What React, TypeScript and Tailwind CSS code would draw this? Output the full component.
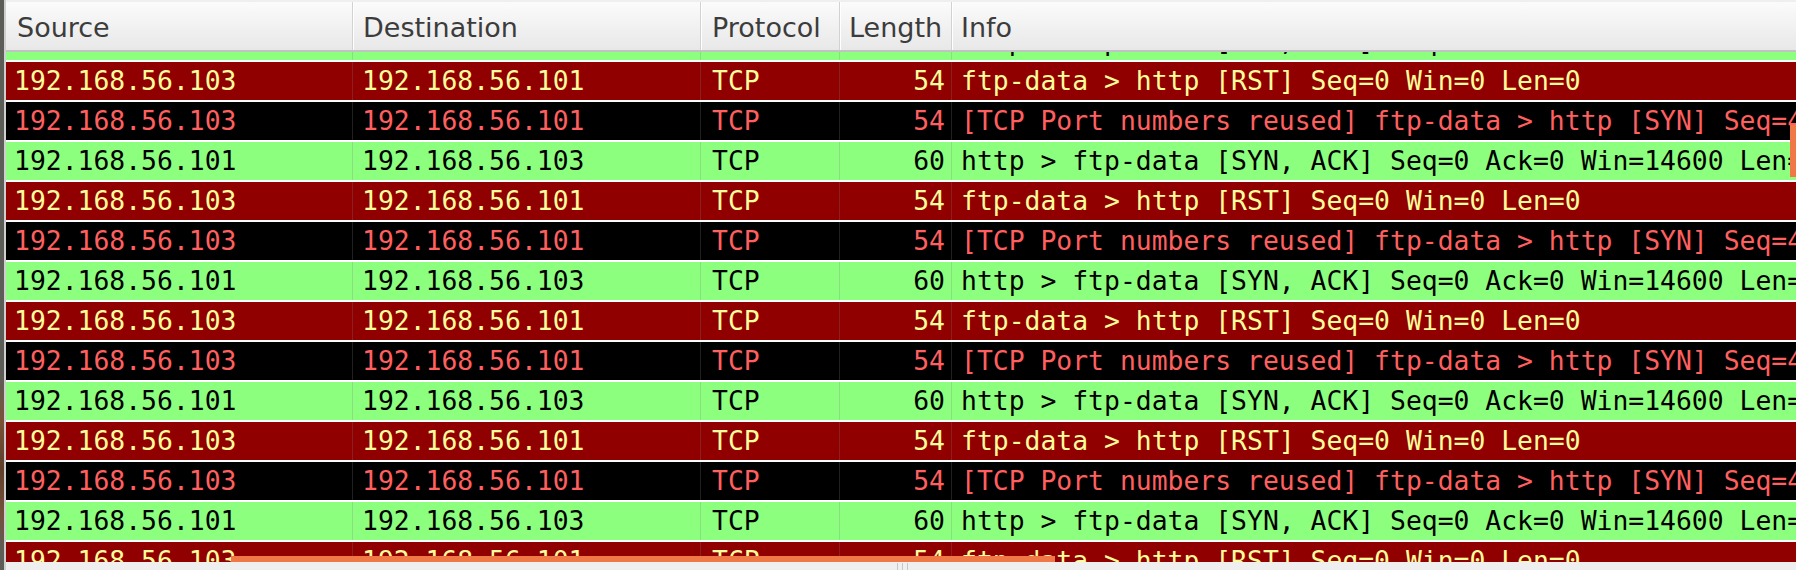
import React from 'react';

type Kind = 'rst' | 'bad' | 'http';

const PACKETS: Record<Kind, { src: string; dst: string; len: string; info: string }> = {
  rst: {
    src: '192.168.56.103',
    dst: '192.168.56.101',
    len: '54',
    info: 'ftp-data > http [RST] Seq=0 Win=0 Len=0',
  },
  bad: {
    src: '192.168.56.103',
    dst: '192.168.56.101',
    len: '54',
    info: '[TCP Port numbers reused] ftp-data > http [SYN] Seq=4112353398 Win=8192 Len=0',
  },
  http: {
    src: '192.168.56.101',
    dst: '192.168.56.103',
    len: '60',
    info: 'http > ftp-data [SYN, ACK] Seq=0 Ack=0 Win=14600 Len=0 MSS=1460',
  },
};

// old wireshark default colouring rules
const ROW_STYLE: Record<Kind, string> = {
  rst: 'bg-[#900000] text-[#fffc9c]',
  bad: 'bg-black text-[#ff5f5f]',
  http: 'bg-[#8cff7f] text-black',
};

const ORDER: Kind[] = ['rst', 'bad', 'http', 'rst', 'bad', 'http', 'rst', 'bad', 'http', 'rst', 'bad', 'http', 'rst'];

const cell = 'h-full shrink-0 flex items-center border-r border-[#80808040]';

const Row: React.FC<{ kind: Kind; className?: string }> = ({ kind, className = '' }) => {
  const p = PACKETS[kind];
  return (
    <div className={`flex h-[40px] shrink-0 border-b-2 border-white whitespace-nowrap ${ROW_STYLE[kind]} ${className}`}>
      <div className={`${cell} w-[347px] pl-[8px]`}>{p.src}</div>
      <div className={`${cell} w-[348px] pl-[9px]`}>{p.dst}</div>
      <div className={`${cell} w-[139px] pl-[11px]`}>TCP</div>
      <div className={`${cell} w-[112px] justify-end pr-[6px]`}>{p.len}</div>
      <div className="h-full flex-1 min-w-0 flex items-center pl-[9px] overflow-hidden">{p.info}</div>
    </div>
  );
};

const headCell = 'h-full shrink-0 flex items-center pt-[4px] border-r border-[#d2d2d2]';

export default function App() {
  return (
    <div className="w-[1796px] h-[570px] flex overflow-hidden bg-white">
      {/* window edge */}
      <div className="w-[4px] h-full shrink-0 bg-[linear-gradient(to_bottom,#5d5d57_0%,#5d5d57_66%,#7a5236_74%,#5e3f2c_82%,#74503a_90%,#5d5d57_97%)]" />
      <div className="w-[2px] h-full shrink-0 bg-[#cfcfcf]" />

      <div className="flex-1 min-w-0 h-full flex flex-col">
        {/* column header */}
        <div className="h-[52px] shrink-0 flex border-t-2 border-b-2 border-t-[#efefef] border-b-[#c2c2c2] bg-gradient-to-b from-[#fbfbfb] to-[#e8e8e8] text-[27px] text-[#3c3c3c] font-['DejaVu_Sans',sans-serif] whitespace-nowrap">
          <div className={`${headCell} w-[347px] pl-[11px]`}>Source</div>
          <div className={`${headCell} w-[348px] pl-[9px] border-l border-l-white`}>Destination</div>
          <div className={`${headCell} w-[139px] pl-[10px] border-l border-l-white`}>Protocol</div>
          <div className={`${headCell} w-[112px] pl-[8px] border-l border-l-white`}>Length</div>
          <div className="h-full flex-1 flex items-center pt-[4px] pl-[8px] border-l border-l-white">Info</div>
        </div>

        {/* packet list */}
        <div className="relative flex-1 min-h-0 flex flex-col overflow-hidden text-[26.4px] font-['DejaVu_Sans_Mono',monospace]">
          <Row kind="http" className="-mt-[30px]" />
          {ORDER.map((k, i) => (
            <Row key={i} kind={k} />
          ))}

          {/* overlay scrollbars */}
          <div className="absolute left-[225px] bottom-0 w-[824px] h-[6px] bg-[#f07746]" />
          <div className="absolute right-0 top-[73px] w-[6px] h-[52px] bg-[#f07746]" />
        </div>

        {/* pane splitter */}
        <div className="h-[8px] shrink-0 bg-[#efefef] flex justify-center items-end gap-[4px] pl-[2px]">
          <div className="w-px h-[7px] bg-[#c6c6c6]" />
          <div className="w-px h-[7px] bg-[#c6c6c6]" />
          <div className="w-px h-[7px] bg-[#c6c6c6]" />
        </div>
      </div>
    </div>
  );
}
